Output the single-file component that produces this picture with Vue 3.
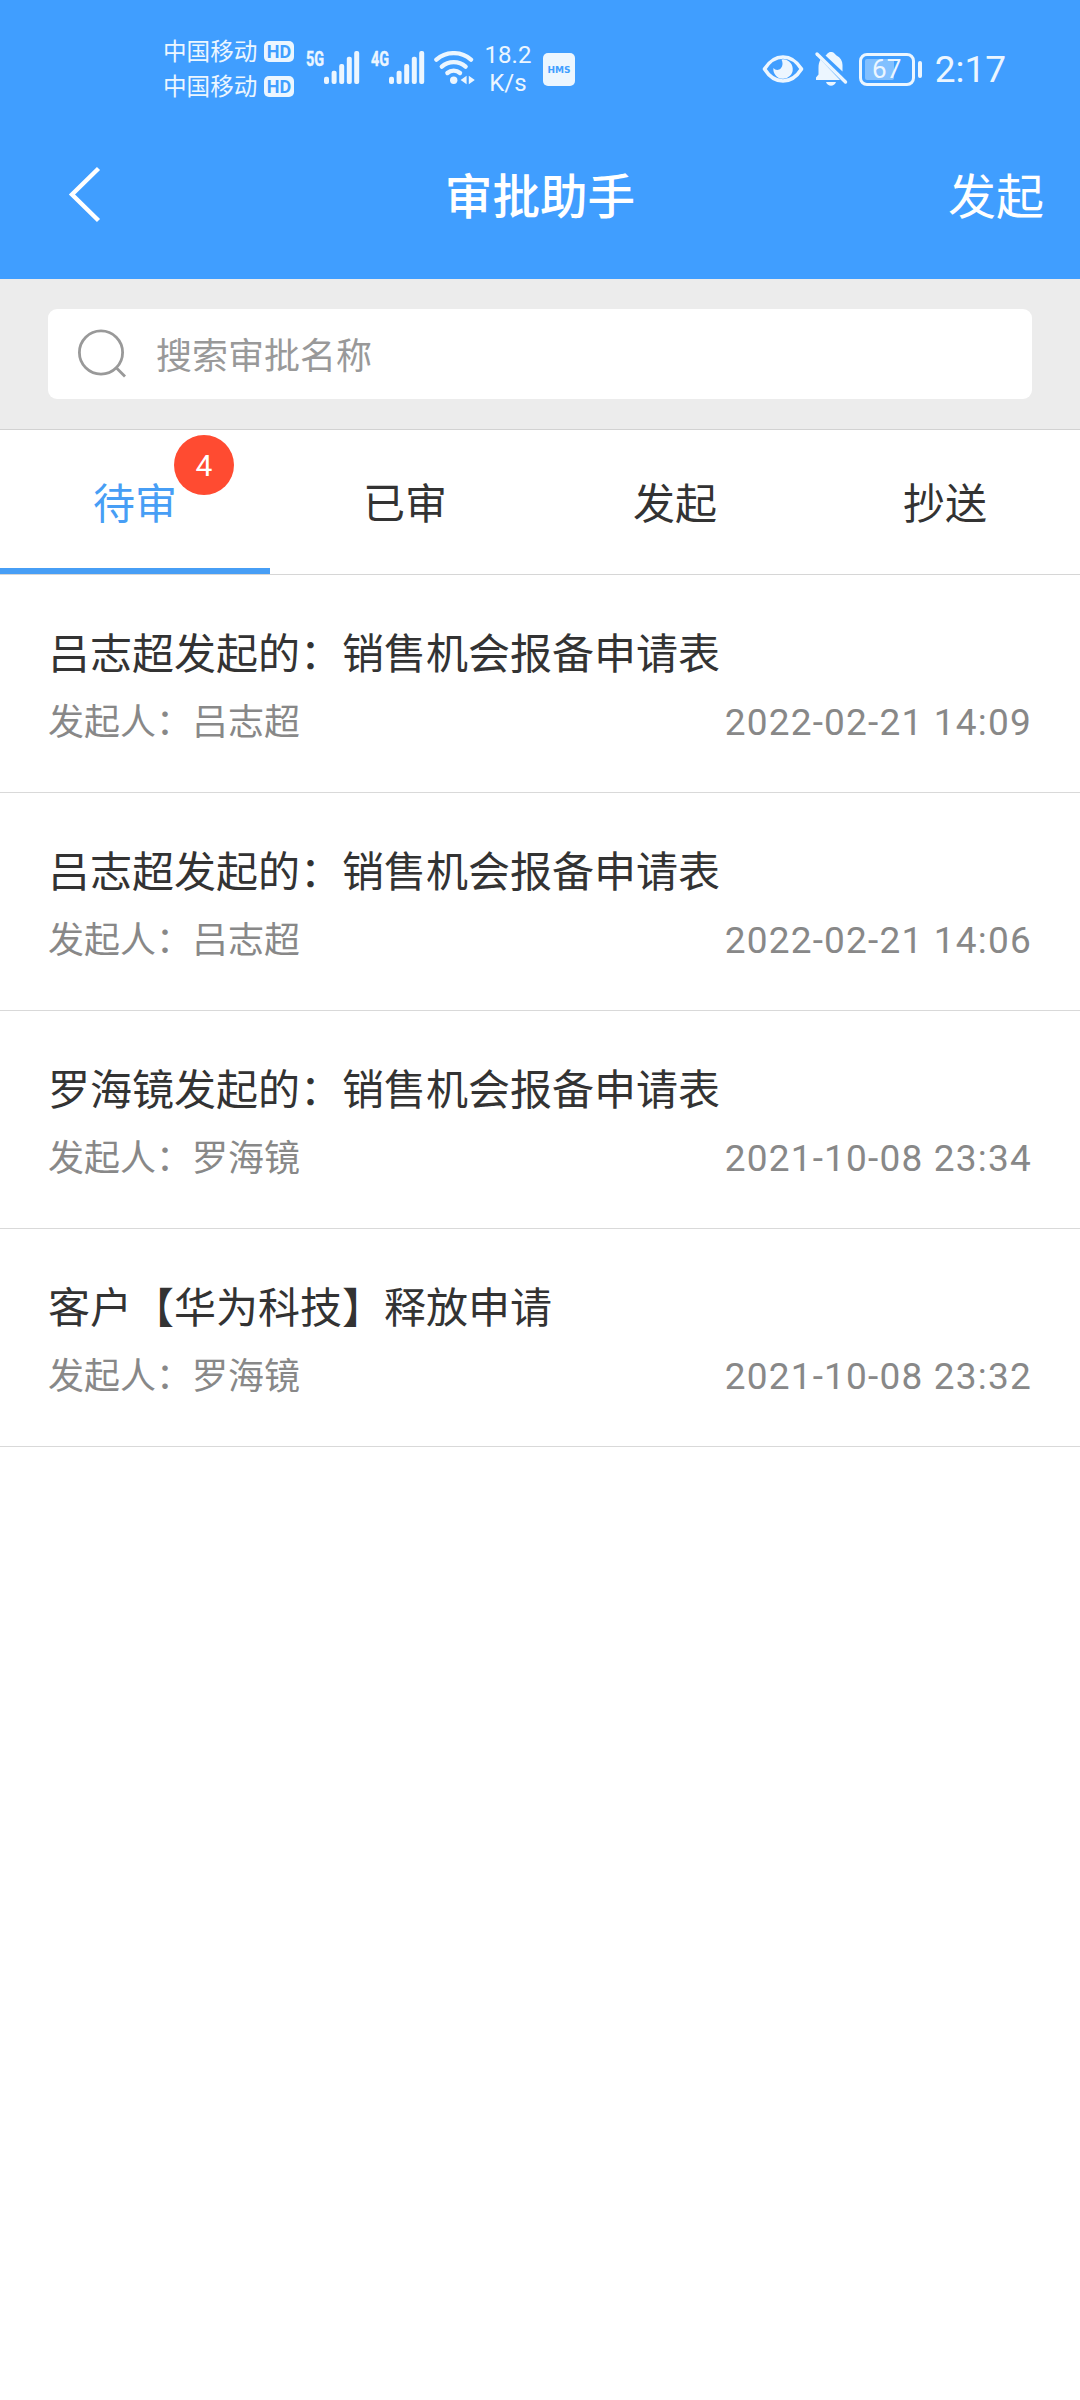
<script setup>
import { ref } from 'vue'

const activeTab = ref(0)
const keyword = ref('')

const tabs = [
  { label: '待审', count: 4 },
  { label: '已审', count: 0 },
  { label: '发起', count: 0 },
  { label: '抄送', count: 0 },
]

const approvals = [
  { title: '吕志超发起的：销售机会报备申请表', user: '吕志超', time: '2022-02-21 14:09' },
  { title: '吕志超发起的：销售机会报备申请表', user: '吕志超', time: '2022-02-21 14:06' },
  { title: '罗海镜发起的：销售机会报备申请表', user: '罗海镜', time: '2021-10-08 23:34' },
  { title: '客户【华为科技】释放申请', user: '罗海镜', time: '2021-10-08 23:32' },
]
</script>

<template>
  <div class="page" lang="zh-CN">
    <header class="header">
      <!-- Barre d'état -->
      <div class="status-bar">
        <div class="carriers">
          <div v-for="n in 2" :key="n" class="carrier">
            <span class="carrier-name">中国移动</span>
            <span class="hd">HD</span>
          </div>
        </div>
        <svg
          v-for="net in ['5G', '4G']"
          :key="net"
          class="signal"
          width="56"
          height="46"
          viewBox="-2 -5 56 46"
        >
          <text x="0" y="15" textLength="18" lengthAdjust="spacingAndGlyphs">{{ net }}</text>
          <rect x="18" y="25.7" width="5" height="7.3" rx="2" />
          <rect x="25.6" y="19.7" width="5" height="13.3" rx="2" />
          <rect x="33.2" y="13" width="5" height="20" rx="2" />
          <rect x="40.8" y="5.7" width="5" height="27.3" rx="2" />
          <rect x="48.2" y="0" width="5" height="33" rx="2" />
        </svg>
        <svg class="wifi" width="44" height="36" viewBox="0 0 44 36">
          <g fill="none" stroke="#ecf6ff" stroke-width="4.4" stroke-linecap="round">
            <path d="M2.4 8.6A26.5 26.5 0 0 1 37 8.6" />
            <path d="M7.8 15.6A18 18 0 0 1 31.6 15.6" />
            <path d="M13.4 22A9.6 9.6 0 0 1 26 22" />
          </g>
          <circle cx="19.7" cy="29.3" r="3.7" fill="#ecf6ff" />
          <path d="M32.6 24.8v8.4l-6-4.2zM34.8 24.8v8.4l6-4.2z" fill="#ecf6ff" />
        </svg>
        <div class="speed"><span>18.2</span><span>K/s</span></div>
        <svg class="hms" width="32" height="33" viewBox="0 0 32 33">
          <rect width="32" height="33" rx="5" fill="#ecf6ff" />
          <text x="4.500" y="20" textLength="23" lengthAdjust="spacingAndGlyphs">HMS</text>
        </svg>

        <div class="status-right">
          <svg width="42" height="30" viewBox="0 0 42 30">
            <path
              d="M2.5 15C7.500 7 14 3 21 3s13.500 4 18.500 12c-5 8-11.500 12-18.500 12S7.500 23 2.500 15z"
              fill="none"
              stroke="#ecf6ff"
              stroke-width="3.6"
              stroke-linejoin="round"
            />
            <path
              d="M19.500 5.500A9.700 9.700 0 1 1 11.400 14c2 2.600 5.600 2.400 7.500.2 2.200-2.500 2-6 .6-8.700z"
              fill="#ecf6ff"
            />
          </svg>
          <svg class="bell" width="34" height="36" viewBox="0 0 34 36">
            <path d="M11.500 4.500C13 3.800 13.600 1 17 1s4 2.600 5.500 3.400C26.500 6.500 28.500 10 28.500 14v6.500z" fill="#ecf6ff" />
            <path d="M6.500 8.500 26 29H2v-2.500l2.500-3V17c0-3.500.5-6 2-8.500z" fill="#ecf6ff" />
            <path d="M12 31h10c-1 2.500-2.800 3.700-5 3.700S13 33.500 12 31z" fill="#ecf6ff" />
            <path d="M5 1.500 33 29.500" stroke="#409eff" stroke-width="2.500" />
            <path d="M3 3 31.500 31" stroke="#ecf6ff" stroke-width="3.400" stroke-linecap="round" />
          </svg>
          <div class="battery">
            <div class="battery-level"></div>
            <span>67</span>
          </div>
          <div class="battery-tip"></div>
          <span class="clock">2:17</span>
        </div>
      </div>

      <!-- Barre de navigation -->
      <nav class="nav">
        <a class="nav-back">
          <svg width="34" height="58" viewBox="0 0 34 58">
            <path d="M31.500 3.500 5 29.500l26.500 26" fill="none" stroke="#fff" stroke-width="4.400" />
          </svg>
        </a>
        <h1>审批助手</h1>
        <a class="nav-action">发起</a>
      </nav>
    </header>

    <div class="search">
      <label class="search-box">
        <svg width="50" height="50" viewBox="0 0 50 50" fill="none" stroke="#999" stroke-width="2.800">
          <circle cx="24" cy="23.500" r="21.600" />
          <path d="M38.500 38 48 47.500" />
        </svg>
        <input v-model="keyword" type="text" placeholder="搜索审批名称" />
      </label>
    </div>

    <div class="tabs">
      <div
        v-for="(tab, i) in tabs"
        :key="tab.label"
        class="tab"
        :class="{ active: activeTab === i }"
        @click="activeTab = i"
      >
        <span class="tab-label">
          {{ tab.label }}
          <span v-if="tab.count" class="badge">{{ tab.count }}</span>
        </span>
      </div>
    </div>

    <div class="list">
      <article v-for="item in approvals" :key="item.time" class="item">
        <h2>{{ item.title }}</h2>
        <div class="item-info">
          <span>发起人：{{ item.user }}</span>
          <time>{{ item.time }}</time>
        </div>
      </article>
    </div>
  </div>
</template>

<style>
body {
  margin: 0;
  background: #fff;
}
</style>

<style scoped>
.page {
  width: 1080px;
  min-height: 2400px;
  background: #fff;
  color: #333;
  font-family: 'Noto Sans CJK SC', sans-serif;
}

.header {
  height: 279px;
  background: #409eff;
  color: #fff;
}

/* --- BARRE D'ÉTAT --- */
.status-bar {
  display: flex;
  align-items: center;
  height: 138px;
  padding: 0 74px 0 163px;
  color: #ecf6ff;
}

.carriers {
  width: 131px;
}

.carrier {
  display: flex;
  align-items: center;
  justify-content: space-between;
  height: 35px;
}

.carrier-name {
  font-size: 23.6px;
  line-height: 33px;
  margin-top: -2px;
}

.hd {
  width: 30px;
  height: 21px;
  border-radius: 5px;
  background: #ecf6ff;
  color: #409eff;
  font: bold 18px/21px Roboto, sans-serif;
  text-align: center;
}

.signal {
  margin-left: 10px;
  fill: #ecf6ff;
}

.signal + .signal {
  margin-left: 9px;
}

.signal text {
  font: bold 20px Roboto, sans-serif;
  stroke: #ecf6ff;
  stroke-width: 0.4px;
}

.wifi {
  margin-left: 9px;
}

.speed {
  display: flex;
  flex-direction: column;
  align-items: center;
  width: 50px;
  margin-left: 5px;
  font: 24px/28.5px Roboto, sans-serif;
}

.hms {
  margin-left: 10px;
}

.hms text {
  fill: #409eff;
  font: bold 9.5px 'DejaVu Sans', sans-serif;
}

.status-right {
  display: flex;
  align-items: center;
  margin-left: auto;
}

.bell {
  margin-left: 10px;
}

.battery {
  position: relative;
  box-sizing: border-box;
  width: 56px;
  height: 33px;
  margin-left: 11px;
  border: 3px solid #ecf6ff;
  border-radius: 8px;
  font: 26px/27px Roboto, sans-serif;
  text-align: center;
}

.battery span {
  position: relative;
}

.battery-level {
  position: absolute;
  top: 3px;
  left: 3px;
  width: 29px;
  height: 21px;
  border-radius: 2px;
  background: rgba(255, 255, 255, 0.35);
}

.battery-tip {
  width: 4px;
  height: 17px;
  margin-left: 3px;
  border-radius: 2px;
  background: #ecf6ff;
}

.clock {
  margin-left: 13px;
  padding-top: 2px;
  font: 37px/44px Roboto, sans-serif;
}

/* --- NAVIGATION --- */
.nav {
  display: grid;
  grid-template-columns: 1fr auto 1fr;
  align-items: center;
  height: 112px;
  padding: 0 36px;
}

.nav-back {
  display: flex;
  padding-left: 31px;
}

.nav h1 {
  margin: -2px 0 0;
  font-size: 47.6px;
  font-weight: 500;
}

.nav-action {
  justify-self: end;
  margin-top: -2px;
  font-size: 48px;
}

/* --- RECHERCHE --- */
.search {
  padding: 30px 48px;
  background: #ececec;
  border-bottom: 1px solid #d2d2d2;
}

.search-box {
  display: flex;
  align-items: center;
  height: 90px;
  padding-left: 29px;
  border-radius: 9px;
  background: #fff;
}

.search-box input {
  flex: 1;
  margin: -2px 0 0 29px;
  padding: 0;
  border: none;
  outline: none;
  background: none;
  font: 36px 'Noto Sans CJK SC', sans-serif;
}

.search-box input::placeholder {
  color: #999;
  opacity: 1;
}

/* --- ONGLETS --- */
.tabs {
  display: flex;
  height: 144px;
  border-bottom: 1px solid #d6d6d6;
}

.tab {
  flex: 1;
  box-sizing: border-box;
  border-bottom: 6px solid transparent;
  text-align: center;
  font-size: 42px;
  line-height: 141px;
}

.tab.active {
  color: #479ef5;
  border-bottom-color: #479ef5;
}

.tab-label {
  position: relative;
}

.badge {
  position: absolute;
  top: -35px;
  left: 81px;
  width: 60px;
  height: 60px;
  border-radius: 50%;
  background: #ff4b31;
  color: #fff;
  font: 30px/62px Roboto, sans-serif;
}

/* --- LISTE --- */
.item {
  box-sizing: border-box;
  height: 218px;
  padding: 42px 48px 0;
  border-bottom: 1px solid #d9d9d9;
}

.item h2 {
  margin: 0;
  font-size: 42px;
  font-weight: 400;
  line-height: 68px;
}

.item-info {
  display: flex;
  align-items: center;
  justify-content: space-between;
  color: #888;
  font-size: 36px;
  line-height: 68px;
}

.item-info time {
  padding-top: 7px;
  font-family: Roboto, sans-serif;
  font-size: 37px;
  line-height: 61px;
  letter-spacing: 1.2px;
}
</style>
